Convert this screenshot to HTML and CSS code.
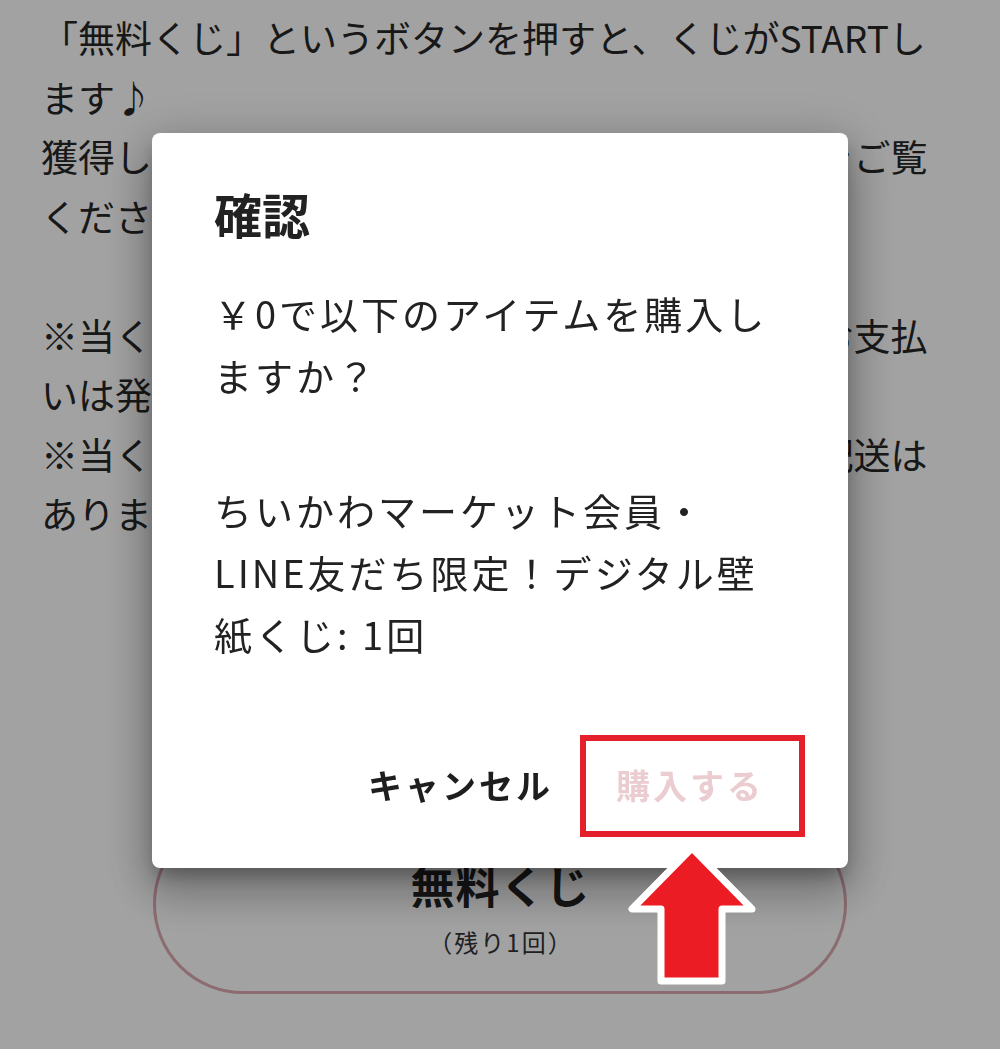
FILE: index.html
```html
<!DOCTYPE html>
<html lang="ja">
<head>
<meta charset="utf-8">
<title>確認</title>
<link rel="stylesheet" href="styles.css">
</head>
<body>
<main class="page">
  <p class="lead">「無料くじ」というボタンを押すと、くじがSTARTします♪<br>獲得したデジタル壁紙はマイページの購入履歴をご覧ください。</p>
  <p class="lead">※当くじはデジタルコンテンツのため、送料のお支払いは発生しません。<br>※当くじはデジタルコンテンツのため、商品の配送はありません。</p>
  <button class="pill" type="button">
    <span class="pill-title">無料くじ</span>
    <span class="pill-sub">（残り1回）</span>
  </button>
</main>

<div class="overlay"></div>

<section class="dialog" role="dialog" aria-labelledby="dlg-title">
  <h2 class="dialog-title" id="dlg-title">確認</h2>
  <div class="dialog-body">
    <p>￥0で以下のアイテムを購入しますか？</p>
    <p>ちいかわマーケット会員・<br>LINE友だち限定！デジタル壁紙くじ: 1回</p>
  </div>
  <div class="dialog-actions">
    <button class="btn btn-cancel" type="button">キャンセル</button>
    <button class="btn btn-buy" type="button">購入する</button>
  </div>
</section>

<div class="mark-box"></div>
<svg class="mark-arrow" width="150" height="160" viewBox="0 0 150 160" aria-hidden="true">
  <polygon points="72,10 12,71 41,71 41,143 102,143 102,71 132,71" fill="#ec1c24" stroke="#ffffff" stroke-width="7" stroke-linejoin="round"/>
</svg>
</body>
</html>
```

FILE: styles.css
```css
* { box-sizing: border-box; }

html, body {
  margin: 0;
  padding: 0;
  height: 100%;
}

body {
  background: #ffffff;
  color: #222222;
  font-family: "Noto Sans CJK JP", "Noto Sans", sans-serif;
  overflow: hidden;
}

.page {
  padding: 8px 59px 0 41px;
}

.lead {
  margin: 0 0 59.5px;
  font-size: 37px;
  line-height: 59.5px;
  color: #262626;
}

.lead:last-of-type {
  margin-bottom: 0;
}

.pill {
  display: flex;
  flex-direction: column;
  align-items: center;
  width: 694px;
  height: 180px;
  margin: 270px 0 0 112px;
  padding: 43px 0 0;
  border: 3px solid #dcaab2;
  border-radius: 90px;
  background: #ffffff;
  font-family: inherit;
  color: #222222;
}

.pill-title {
  font-size: 44px;
  font-weight: 700;
  line-height: 50px;
  letter-spacing: 1px;
  padding-left: 1px;
}

.pill-sub {
  margin-top: 17px;
  padding-left: 2px;
  font-size: 24px;
  line-height: 30px;
  letter-spacing: 2px;
  color: #333333;
}

.overlay {
  position: fixed;
  inset: 0;
  background: rgba(0, 0, 0, 0.365);
}

.dialog {
  position: fixed;
  left: 152px;
  top: 133px;
  width: 696px;
  height: 735px;
  display: flex;
  flex-direction: column;
  padding: 50px 58px 47px 62px;
  background: #ffffff;
  border-radius: 8px;
  box-shadow:
    0 10px 18px -4px rgba(0, 0, 0, 0.28),
    0 24px 44px 4px rgba(0, 0, 0, 0.22),
    0 8px 50px 10px rgba(0, 0, 0, 0.14);
}

.dialog-title {
  margin: 0;
  font-size: 48px;
  font-weight: 700;
  line-height: 60px;
  color: #222222;
}

.dialog-body {
  margin-top: 39px;
  font-size: 38px;
  line-height: 62px;
  letter-spacing: 3px;
  color: #222222;
}

.dialog-body p {
  margin: 0 0 73px;
}

.dialog-body p:last-child {
  margin-bottom: 0;
}

.dialog-actions {
  margin-top: auto;
  display: flex;
  justify-content: flex-end;
  gap: 31px;
  padding-right: 10px;
}

.btn {
  height: 72px;
  padding: 0 16px;
  border: 0;
  background: transparent;
  font-family: inherit;
  font-size: 34px;
  font-weight: 700;
  letter-spacing: 3px;
  line-height: 72px;
}

.btn-cancel {
  color: #1e1e1e;
}

.btn-buy {
  color: #ebcdd1;
}

.mark-box {
  position: absolute;
  left: 580px;
  top: 735px;
  width: 225px;
  height: 102px;
  border: 6px solid #e4202a;
}

.mark-arrow {
  position: absolute;
  left: 620px;
  top: 838px;
}
```
